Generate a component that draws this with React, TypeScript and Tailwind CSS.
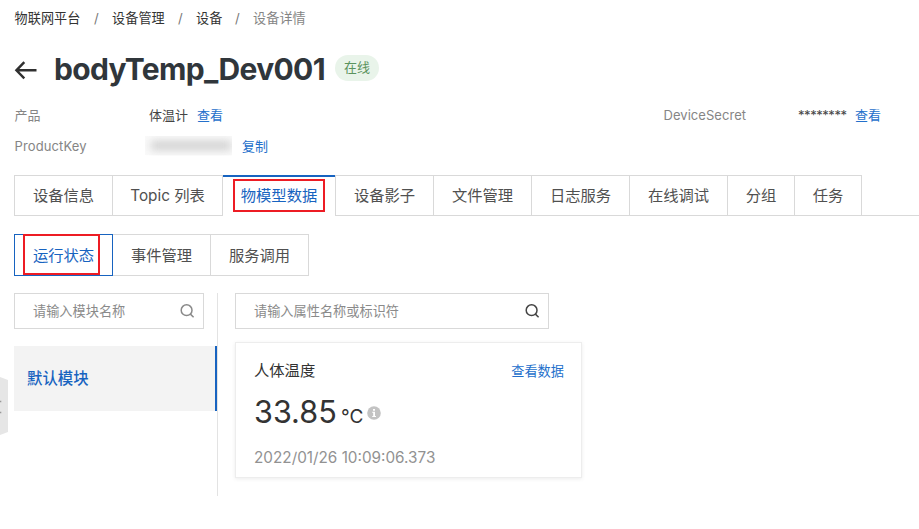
import React from "react";

const tabs = [
  { label: "设备信息", width: "w-[99px]" },
  { label: "Topic 列表", width: "w-[110px]" },
  { label: "物模型数据", width: "w-[112px]" },
  { label: "设备影子", width: "w-[99px]" },
  { label: "文件管理", width: "w-[98px]" },
  { label: "日志服务", width: "w-[98px]" },
  { label: "在线调试", width: "w-[98px]" },
  { label: "分组", width: "w-[67px]" },
  { label: "任务", width: "w-[67px]" },
];

function SearchIcon({ className }: { className: string }) {
  return (
    <svg className={className} width="16" height="16" viewBox="0 0 16 16" fill="none" stroke="currentColor" strokeWidth="1.5">
      <circle cx="7.6" cy="7.2" r="5.4" />
      <path d="M11.4 11.1 L14.6 14.2" />
    </svg>
  );
}

function Breadcrumbs() {
  return (
    <nav className="flex h-5 items-center text-[13.1px] leading-5 tracking-[0.1px] text-[#333]">
      <span className="w-[80px] pl-[0.5px]">物联网平台</span>
      <span className="w-[18px] text-[#777]">/</span>
      <span className="w-[66px]">设备管理</span>
      <span className="w-[18px] text-[#777]">/</span>
      <span className="w-[39px]">设备</span>
      <span className="w-[18px] text-[#777]">/</span>
      <span className="text-[#858585]">设备详情</span>
    </nav>
  );
}

function Tabs() {
  return (
    <div className="flex h-[41px] text-[15.3px]">
      {tabs.map((tab, i) =>
        i === 2 ? (
          <div key={tab.label} className={`${tab.width} relative flex items-center justify-center border-t-2 border-[#1763c0] text-[#1763c0]`}>
            <span>{tab.label}</span>
            <div className="absolute top-[2px] left-[10px] h-[33px] w-[92px] border-2 border-[#ed1c24]" />
          </div>
        ) : (
          <div
            key={tab.label}
            className={`${tab.width} flex items-center justify-center border-y border-r border-[#d9d9d9] pt-[2px] text-[#505050] ${i === 0 || i === 3 ? "border-l" : ""}`}
          >
            {tab.label}
          </div>
        ),
      )}
      <div className="flex-1 border-b border-[#d9d9d9]" />
    </div>
  );
}

export default function App() {
  return (
    <main className="relative h-[529px] w-[919px] overflow-hidden bg-white pt-2 pl-[14px] font-[Inter,'Noto_Sans_CJK_SC',sans-serif]">
      <Breadcrumbs />

      <header className="mt-5 flex h-[42px] items-center">
        <svg className="mt-[4px] w-[24px]" width="24" height="20" viewBox="0 0 24 20" fill="none" stroke="#303030" strokeWidth="2.4">
          <path d="M22.5 9.3 H2.4 M10.3 1.2 L2.4 9.3 L10.3 17.4" />
        </svg>
        <h1 className="mb-px ml-4 w-[273px] text-[30px] leading-[40px] font-bold tracking-[-0.68px] whitespace-nowrap text-[#30363b]">bodyTemp_Dev001</h1>
        <span className="mb-[3px] ml-[8px] flex h-[26px] w-[44px] items-center justify-center rounded-full bg-[#e9f4ea] text-[13px] text-[#5b935e]">在线</span>
      </header>

      <section className="mt-[15px] text-[13px] leading-5 text-[#858585]">
        <div className="flex h-5">
          <span className="w-[135px] pl-[0.5px]">产品</span>
          <span className="w-[48px] text-[#444]">体温计</span>
          <span className="w-[452px] text-[#2470cb]">查看</span>
          <span className="w-[149px] pl-[14.5px] tracking-[0.05px]">DeviceSecret</span>
          <span className="w-[57px] tracking-[-0.45px] text-[#444]">********</span>
          <span className="text-[#2470cb]">查看</span>
        </div>
        <div className="mt-[11px] flex h-5">
          <span className="w-[131px] pl-[0.5px] tracking-[0.12px]">ProductKey</span>
          <span className="flex h-5 w-[87px] overflow-hidden">
            <span className="-mt-px h-5 w-[87px] bg-[#fafafa]">
              <span className="mt-[6px] ml-[6px] block h-[9px] w-[80px] bg-[#cfcfcf] blur-[4px]" />
            </span>
          </span>
          <span className="ml-[10px] text-[#2470cb]">复制</span>
        </div>
      </section>

      <div className="mt-[19px]">
        <Tabs />
      </div>

      <div className="mt-[18px] flex h-[42px] text-[15.3px] text-[#505050]">
        <div className="relative flex w-[99px] items-center justify-center border border-[#1763c0] pt-[2px] text-[#1763c0]">
          运行状态
          <div className="absolute -top-px left-[8px] h-[41px] w-[77px] border-2 border-[#ed1c24]" />
        </div>
        <div className="flex w-[98px] items-center justify-center border-y border-r border-[#d9d9d9] pt-[2px]">事件管理</div>
        <div className="flex w-[98px] items-center justify-center border-y border-r border-[#d9d9d9] pt-[2px]">服务调用</div>
      </div>

      <div className="mt-[17px] flex h-[203px]">
        <aside className="w-[204px] border-r border-[#e3e3e3]">
          <div className="flex h-9 w-[190px] items-center justify-between border border-[#d9d9d9] pr-[8px] pl-[18px] text-[13.2px] text-[#8a8a8a]">
            <span className="pt-[2px]">请输入模块名称</span>
            <SearchIcon className="text-[#8a8a8a]" />
          </div>
          <div className="mt-[17px] flex h-[65px] items-center border-r-2 border-[#1763c0] bg-[#f3f3f3] pl-[13px] text-[15.4px] font-medium text-[#1763c0]">
            默认模块
          </div>
        </aside>

        <section className="ml-[17px] w-[347px]">
          <div className="flex h-9 w-[314px] items-center justify-between border border-[#d9d9d9] pr-[8px] pl-[18px] text-[13.2px] text-[#8a8a8a]">
            <span className="pt-[2px]">请输入属性名称或标识符</span>
            <SearchIcon className="text-[#444]" />
          </div>
          <article className="mt-[13px] h-[136px] border border-[#ededed] pt-[16px] pr-[17px] pl-[18px] shadow-[0_1px_4px_rgba(0,0,0,0.08)]">
            <div className="flex h-6 items-center justify-between">
              <span className="text-[15.3px] text-[#333]">人体温度</span>
              <span className="pt-[2px] text-[13.2px] text-[#2470cb]">查看数据</span>
            </div>
            <div className="mt-[9px] flex h-10 items-baseline text-[#333]">
              <span className="w-[87px] text-[30.6px] leading-10">33.85</span>
              <span className="w-[23px] text-[19px]">°C</span>
              <svg className="relative -top-[3px] ml-[3px]" width="14" height="14" viewBox="0 0 14 14">
                <circle cx="7" cy="7" r="6.8" fill="#c3c3c3" />
                <path d="M6 3 H8 V4.7 H6 Z M5.2 5.8 H8 V10 H9 V11 H5.2 V10 H6.2 V6.8 H5.2 Z" fill="#fff" />
              </svg>
            </div>
            <div className="mt-[16px] text-[15.3px] leading-5 text-[#929292]">2022/01/26 10:09:06.373</div>
          </article>
        </section>
      </div>

      <svg className="absolute top-[376px] left-0" width="8" height="60" viewBox="0 0 8 60">
        <path d="M0 1 L8 4 V56 L0 59 Z" fill="#e6e6e6" />
        <path d="M0 25.5 H1.3 M0 36.5 H1.3" stroke="#999" strokeWidth="1.4" />
      </svg>
    </main>
  );
}
